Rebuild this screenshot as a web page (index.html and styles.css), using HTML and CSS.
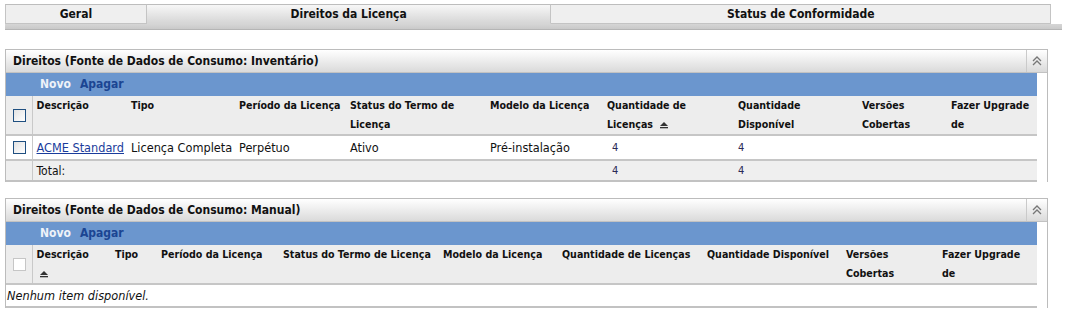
FILE: index.html
```html
<!DOCTYPE html>
<html lang="pt">
<head>
    <meta charset="UTF-8">
    <title>Direitos da Licença</title>
    <link rel="stylesheet" href="styles.css">
</head>
<body>
    <div class="tabs">
        <div class="tab-row">
            <div class="tab tab-geral">Geral</div>
            <div class="tab tab-active tab-direitos">Direitos da Licença</div>
            <div class="tab tab-status">Status de Conformidade</div>
        </div>
        <div class="tab-base"></div>
    </div>

    <div class="panel">
        <div class="panel-head">
            <span class="panel-title">Direitos (Fonte de Dados de Consumo: Inventário)</span>
            <span class="collapse">
                <svg width="10" height="10" viewBox="0 0 10 10"><polyline points="1,5 5,1 9,5" fill="none" stroke="#777" stroke-width="1.3"/><polyline points="1,9 5,5 9,9" fill="none" stroke="#777" stroke-width="1.3"/></svg>
            </span>
        </div>
        <div class="panel-body">
            <div class="toolbar"><span class="btn-new">Novo</span><span class="btn-del">Apagar</span></div>
            <table class="grid">
                <colgroup>
                    <col style="width:26px"><col style="width:95px"><col style="width:108px"><col style="width:111px"><col style="width:140px"><col style="width:117px"><col style="width:131px"><col style="width:124px"><col style="width:89px"><col style="width:90px">
                </colgroup>
                <tr class="head">
                    <th class="check"><span class="box"></span></th>
                    <th>Descrição</th>
                    <th>Tipo</th>
                    <th>Período da Licença</th>
                    <th>Status do Termo de Licença</th>
                    <th>Modelo da Licença</th>
                    <th>Quantidade de Licenças <svg class="sort" width="8" height="8" viewBox="0 0 8 8"><polygon points="0,5 4,1 8,5" fill="#333"/><rect x="0" y="6" width="8" height="1.3" fill="#333"/></svg></th>
                    <th>Quantidade Disponível</th>
                    <th>Versões Cobertas</th>
                    <th>Fazer Upgrade de</th>
                </tr>
                <tr class="row">
                    <td class="check"><span class="box"></span></td>
                    <td><a href="#" class="link">ACME Standard</a></td>
                    <td>Licença Completa</td>
                    <td>Perpétuo</td>
                    <td>Ativo</td>
                    <td>Pré-instalação</td>
                    <td class="num lic">4</td>
                    <td class="num">4</td>
                    <td></td>
                    <td></td>
                </tr>
                <tr class="total">
                    <td class="check"></td>
                    <td>Total:</td>
                    <td></td>
                    <td></td>
                    <td></td>
                    <td></td>
                    <td class="num lic">4</td>
                    <td class="num">4</td>
                    <td></td>
                    <td></td>
                </tr>
            </table>
        </div>
    </div>

    <div class="panel">
        <div class="panel-head">
            <span class="panel-title">Direitos (Fonte de Dados de Consumo: Manual)</span>
            <span class="collapse">
                <svg width="10" height="10" viewBox="0 0 10 10"><polyline points="1,5 5,1 9,5" fill="none" stroke="#777" stroke-width="1.3"/><polyline points="1,9 5,5 9,9" fill="none" stroke="#777" stroke-width="1.3"/></svg>
            </span>
        </div>
        <div class="panel-body">
            <div class="toolbar"><span class="btn-new">Novo</span><span class="btn-del">Apagar</span></div>
            <table class="grid">
                <colgroup>
                    <col style="width:26px"><col style="width:79px"><col style="width:46px"><col style="width:122px"><col style="width:160px"><col style="width:119px"><col style="width:145px"><col style="width:139px"><col style="width:96px"><col style="width:99px">
                </colgroup>
                <tr class="head">
                    <th class="check"><span class="box box-off"></span></th>
                    <th>Descrição<br><svg class="sort sort-down" width="8" height="8" viewBox="0 0 8 8"><polygon points="0,5 4,1 8,5" fill="#333"/><rect x="0" y="6" width="8" height="1.3" fill="#333"/></svg></th>
                    <th>Tipo</th>
                    <th>Período da Licença</th>
                    <th>Status do Termo de Licença</th>
                    <th>Modelo da Licença</th>
                    <th>Quantidade de Licenças</th>
                    <th>Quantidade Disponível</th>
                    <th>Versões Cobertas</th>
                    <th>Fazer Upgrade de</th>
                </tr>
                <tr class="empty">
                    <td colspan="10">Nenhum item disponível.</td>
                </tr>
            </table>
        </div>
    </div>
</body>
</html>
```

FILE: styles.css
```css
body {
    margin: 0;
    padding: 4px 4px 0 5px;
    font-family: "DejaVu Sans Condensed", "DejaVu Sans", sans-serif;
    font-size: 12.6px;
    color: #111;
    background: #fff;
}
.tabs {
    margin-bottom: 19px;
}
.tab-row {
    display: flex;
    width: 1046px;
}
.tab {
    height: 18px;
    line-height: 18px;
    text-align: center;
    font-weight: bold;
    font-size: 12px;
    background: #efefef;
    border-top: 1px solid #bdbdbd;
    border-bottom: 1px solid #c4c4c4;
    border-right: 1px solid #c4c4c4;
}
.tab-geral {
    width: 140px;
    border-left: 1px solid #c4c4c4;
}
.tab-direitos {
    width: 404px;
}
.tab-status {
    width: 499px;
}
.tab-active {
    background: linear-gradient(#f7f7f7, #d6d6d6);
    border-bottom-color: #d6d6d6;
}
.tab-base {
    width: 1057px;
    height: 5px;
    background: linear-gradient(#d6d6d6, #c9c9c9);
    border-bottom: 1px solid #b5b5b5;
}
.panel {
    width: 1041px;
    border: 1px solid #bcbcbc;
    border-bottom: none;
    margin-bottom: 16px;
}
.panel-head {
    display: flex;
    height: 22px;
    background: linear-gradient(#ffffff, #dadada);
    border-bottom: 1px solid #c2c2c2;
}
.panel-title {
    flex: 1;
    padding-left: 7px;
    line-height: 22px;
    font-weight: bold;
    font-size: 12px;
}
.collapse {
    width: 20px;
    border-left: 1px solid #cacaca;
    display: flex;
    justify-content: center;
    align-items: center;
}
.panel-body {
    padding-right: 10px;
}
.toolbar {
    height: 23px;
    line-height: 22px;
    background: #6b96ce;
    padding-left: 34px;
    font-weight: bold;
    font-size: 12px;
}
.btn-new {
    color: #eef2f9;
    margin-right: 9px;
}
.btn-del {
    color: #1b4592;
}
.grid {
    width: 1031px;
    table-layout: fixed;
    border-collapse: collapse;
    border-bottom: 2px solid #c2c2c2;
}
.grid th, .grid td {
    padding: 0 4px;
    text-align: left;
    vertical-align: top;
}
.grid td {
    white-space: nowrap;
}
.head {
    height: 36px;
    background: #ededed;
    border-bottom: 2px solid #c6c6c6;
}
.head th {
    font-size: 10.6px;
    font-weight: bold;
    line-height: 19px;
    height: 36px;
    box-sizing: border-box;
    padding-top: 0;
    overflow: hidden;
}
.check {
    border-right: 1px solid #c9c9c9;
}
.grid .check {
    padding: 0 0 0 7px;
}
.head .check {
    vertical-align: middle;
}
.box {
    display: block;
    width: 11px;
    height: 11px;
    border: 1px solid #1f4f80;
    background: linear-gradient(135deg, #e2e2e2, #ffffff);
}
.box-off {
    border-color: #c6c6c6;
    background: #fff;
}
.row {
    height: 25px;
    background: #fff;
    border-bottom: 2px solid #c6c6c6;
}
.row td {
    vertical-align: middle;
}
.total {
    height: 21px;
    background: #efefef;
}
.total td {
    vertical-align: middle;
    font-size: 12px;
}
.link {
    color: #1a3c9c;
    text-decoration: underline;
}
.grid .num {
    color: #2a2a55;
    font-size: 11px;
}
.grid .lic {
    padding-left: 9px;
}
.sort {
    margin-left: 4px;
    vertical-align: -1px;
}
.sort-down {
    margin-left: 3px;
}
.empty {
    height: 23px;
    background: #fff;
}
.grid .empty td {
    padding-left: 1px;
    vertical-align: middle;
    font-style: italic;
}
```
